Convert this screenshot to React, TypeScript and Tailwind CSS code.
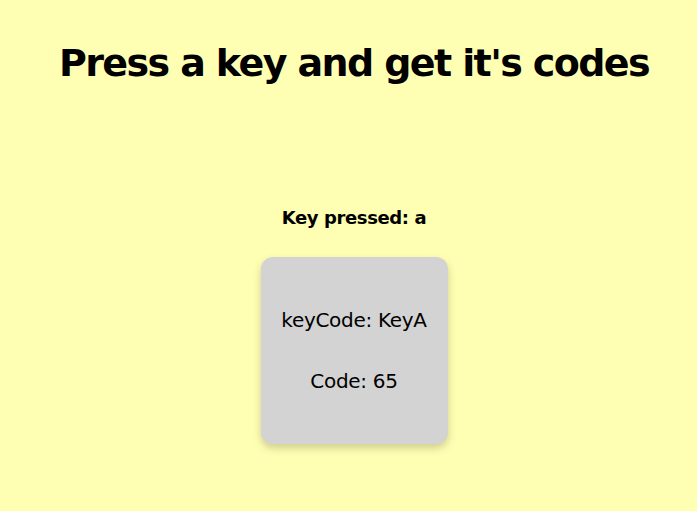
export default function App() {
  return (
    <div
      className="min-h-[511px] w-full bg-[#ffffb4] flex flex-col items-center text-black pl-[11px]"
      style={{ fontFamily: '"DejaVu Sans", sans-serif' }}
    >
      <h1 className="mt-[38px] text-[38px] leading-[50px] font-bold tracking-[-1.6px]">
        Press a key and get it's codes
      </h1>
      <div className="mt-[118px] text-[18px] leading-[24px] font-bold tracking-[-0.4px]">
        Key pressed: a
      </div>
      <div className="mt-[27px] w-[187px] h-[187px] rounded-[12px] bg-[#d3d3d3] shadow-[0_4px_8px_rgba(0,0,0,0.2)] flex flex-col items-center justify-center gap-[37px]">
        <div className="text-[20px] leading-[24px] tracking-[-0.3px]">keyCode: KeyA</div>
        <div className="text-[20px] leading-[24px] tracking-[-0.3px]">Code: 65</div>
      </div>
    </div>
  );
}
